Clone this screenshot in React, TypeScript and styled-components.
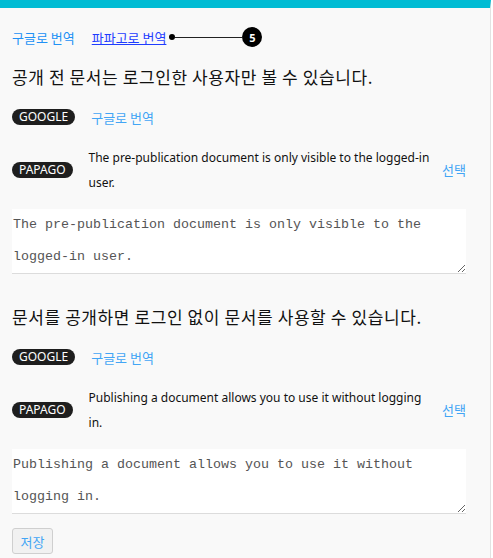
import styled, { createGlobalStyle } from "styled-components";

const GlobalStyle = createGlobalStyle`
  html, body {
    margin: 0;
    padding: 0;
    background: #ffffff;
  }
  body {
    font-family: "Noto Sans", "Noto Sans CJK KR", sans-serif;
  }
`;

const Panel = styled.div`
  width: 491px;
  height: 558px;
  box-sizing: border-box;
  background-color: #f9f9f9;
  border-top: 8px solid #00bcd4;
  border-right: 1px solid #e2e2e2;
  padding: 20px 24px 0 12px;
  display: flex;
  flex-direction: column;
  overflow: hidden;
`;

const TopLinks = styled.div`
  display: flex;
  align-items: center;
  gap: 17px;
  height: 18px;
  font-family: "Noto Sans CJK KR", sans-serif;
  font-size: 13px;
`;

const TopLink = styled.a<{ $active?: boolean }>`
  color: ${(p) => (p.$active ? "#1f3dff" : "#2191f5")};
  text-decoration: ${(p) => (p.$active ? "underline" : "none")};
  cursor: pointer;
`;

const Callout = styled.span`
  display: flex;
  align-items: center;
  margin-left: -14px;
`;

const Dot = styled.span`
  width: 6px;
  height: 6px;
  border-radius: 50%;
  background: #000;
`;

const Line = styled.span`
  width: 67px;
  height: 1px;
  background: #222;
`;

const Step = styled.span`
  width: 20px;
  height: 20px;
  border-radius: 50%;
  background: #000;
  color: #fff;
  font-family: "Noto Sans", sans-serif;
  font-size: 11px;
  font-weight: 700;
  display: flex;
  align-items: center;
  justify-content: center;
`;

const Section = styled.div`
  display: flex;
  flex-direction: column;
  margin-top: 19px;
  & + & {
    margin-top: 31px;
  }
`;

const Heading = styled.div`
  font-family: "Noto Sans CJK KR", sans-serif;
  font-size: 17px;
  letter-spacing: 0.6px;
  line-height: 24px;
  color: #111;
`;

const Row = styled.div<{ $gapTop: number }>`
  display: flex;
  align-items: center;
  margin-top: ${(p) => p.$gapTop}px;
  min-height: 24px;
`;

const Badge = styled.span`
  flex: none;
  height: 16px;
  line-height: 16px;
  padding: 0 7px;
  border-radius: 8px;
  background: #1e1e1e;
  color: #fff;
  font-size: 12px;
  margin-right: 16px;
`;

const SmallLink = styled.a`
  font-family: "Noto Sans CJK KR", sans-serif;
  font-size: 13px;
  color: #42a5f5;
  cursor: pointer;
`;

const Translated = styled.div`
  flex: 1;
  font-size: 12px;
  line-height: 25px;
  color: #111;
  padding-top: 1px;
`;

const Choose = styled(SmallLink)`
  flex: none;
  margin-left: 12px;
`;

const Editor = styled.textarea`
  margin-top: 14px;
  width: 100%;
  height: 65px;
  box-sizing: border-box;
  border: none;
  border-bottom: 1px solid #dcdcdc;
  background: #fff;
  padding: 0 1px;
  font-family: "Liberation Mono", monospace;
  font-size: 13.33px;
  line-height: 32px;
  color: #555;
  outline: none;
`;

const SaveButton = styled.button`
  align-self: flex-start;
  margin-top: 14px;
  height: 26px;
  width: 41px;
  padding: 0;
  border: 1px solid #cfcfcf;
  border-radius: 3px;
  background: #f1f1f1;
  color: #42a5f5;
  font-family: "Noto Sans CJK KR", sans-serif;
  font-size: 13px;
`;

type Entry = {
  source: string;
  papago: string;
};

const entries: Entry[] = [
  {
    source: "공개 전 문서는 로그인한 사용자만 볼 수 있습니다.",
    papago: "The pre-publication document is only visible to the logged-in user.",
  },
  {
    source: "문서를 공개하면 로그인 없이 문서를 사용할 수 있습니다.",
    papago: "Publishing a document allows you to use it without logging in.",
  },
];

export default function App() {
  return (
    <>
      <GlobalStyle />
      <Panel>
        <TopLinks>
          <TopLink>구글로 번역</TopLink>
          <TopLink $active>파파고로 번역</TopLink>
          <Callout>
            <Dot />
            <Line />
            <Step>5</Step>
          </Callout>
        </TopLinks>
        {entries.map((e) => (
          <Section key={e.source}>
            <Heading>{e.source}</Heading>
            <Row $gapTop={16}>
              <Badge>GOOGLE</Badge>
              <SmallLink>구글로 번역</SmallLink>
            </Row>
            <Row $gapTop={15}>
              <Badge>PAPAGO</Badge>
              <Translated>{e.papago}</Translated>
              <Choose>선택</Choose>
            </Row>
            <Editor defaultValue={e.papago} />
          </Section>
        ))}
        <SaveButton>저장</SaveButton>
      </Panel>
    </>
  );
}
